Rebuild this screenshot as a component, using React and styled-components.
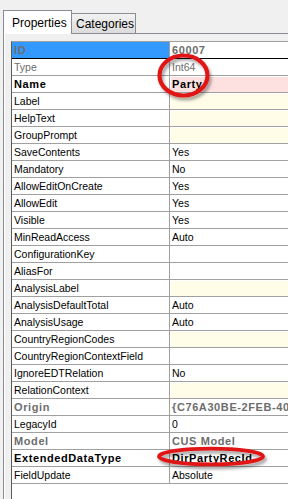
import React from 'react';
import styled, { createGlobalStyle } from 'styled-components';

const GlobalStyle = createGlobalStyle`
    html, body {
        margin: 0;
        padding: 0;
        background: #f0f0f0;
    }
    body {
        font-family: "Liberation Sans", Arial, sans-serif;
        font-size: 11px;
        color: #000;
    }
`

const Window = styled.div`
    position: relative;
    width: 288px;
    height: 499px;
    overflow: hidden;
    display: flex;
    flex-direction: column;
    background: #f0f0f0;
`

const TabStrip = styled.div`
    display: flex;
    align-items: flex-end;
    padding: 10px 0 0 3px;
    height: 23px;
    position: relative;
    z-index: 2;
`

const Tab = styled.div`
    box-sizing: border-box;
    display: flex;
    align-items: center;
    font-size: 12px;
    border: 1px solid #898c95;
    border-bottom: none;
    ${p => p.active ? `
        width: 69px;
        height: 24px;
        margin-bottom: -1px;
        padding-left: 8px;
        background: #fff;
    ` : `
        width: 65px;
        height: 20px;
        margin-left: -1px;
        padding-left: 4px;
        background: linear-gradient(#f3f3f3, #e6e6e6 50%, #dcdcdc);
    `}
`

const Panel = styled.div`
    flex: 1;
    display: flex;
    flex-direction: column;
    background: #f0f0f0;
    border-top: 1px solid #898c95;
    border-left: 1px solid #898c95;
    margin-left: 3px;
    padding: 7px 0 0 7px;
    box-shadow: inset 1px 0 0 #fff;
`

const Grid = styled.div`
    flex: 1;
    width: 300px;
    background: #fff;
    border-top: 1px solid #a0a0a0;
    border-left: 1px solid #5a5a5a;
`

const Row = styled.div`
    display: flex;
    height: 16px;
    border-bottom: 1px solid ${p => p.selected ? '#000' : '#a0a0a0'};
`

const cellText = p => `
    font-weight: ${p.bold ? 'bold' : 'normal'};
    font-size: ${p.bold ? '11px' : '10.5px'};
    letter-spacing: ${p.bold ? '0.6px' : '0'};
    color: ${p.muted ? '#6d6d6d' : '#000'};
`

const NameCell = styled.div`
    box-sizing: border-box;
    width: 158px;
    flex: none;
    padding-left: 2px;
    line-height: 16px;
    white-space: nowrap;
    overflow: hidden;
    border-right: 1px solid #a0a0a0;
    background: ${p => p.selected ? '#3399ff' : 'transparent'};
    ${cellText}
`

const ValueCell = styled.div`
    flex: 1;
    margin: 1px 0 0 1px;
    padding-left: 1px;
    line-height: 15px;
    white-space: nowrap;
    overflow: hidden;
    background: ${p => p.tint === 'pink' ? '#fde0e0' : p.tint === 'yellow' ? '#fffde8' : 'transparent'};
    ${cellText}
`

const Marks = styled.svg`
    position: absolute;
    top: 0;
    left: 0;
    pointer-events: none;
    z-index: 5;
`

const rows = [
    { name: 'ID', value: '60007', nameBold: true, nameMuted: true, bold: true, muted: true, selected: true },
    { name: 'Type', value: 'Int64', nameMuted: true, muted: true },
    { name: 'Name', value: 'Party', nameBold: true, bold: true, tint: 'pink' },
    { name: 'Label', tint: 'yellow' },
    { name: 'HelpText', tint: 'yellow' },
    { name: 'GroupPrompt', tint: 'yellow' },
    { name: 'SaveContents', value: 'Yes' },
    { name: 'Mandatory', value: 'No' },
    { name: 'AllowEditOnCreate', value: 'Yes' },
    { name: 'AllowEdit', value: 'Yes' },
    { name: 'Visible', value: 'Yes' },
    { name: 'MinReadAccess', value: 'Auto' },
    { name: 'ConfigurationKey' },
    { name: 'AliasFor' },
    { name: 'AnalysisLabel', tint: 'yellow' },
    { name: 'AnalysisDefaultTotal', value: 'Auto' },
    { name: 'AnalysisUsage', value: 'Auto' },
    { name: 'CountryRegionCodes', tint: 'yellow' },
    { name: 'CountryRegionContextField' },
    { name: 'IgnoreEDTRelation', value: 'No' },
    { name: 'RelationContext', tint: 'yellow' },
    { name: 'Origin', value: '{C76A30BE-2FEB-40', nameBold: true, nameMuted: true, bold: true, muted: true },
    { name: 'LegacyId', value: '0' },
    { name: 'Model', value: 'CUS Model', nameBold: true, nameMuted: true, bold: true, muted: true },
    { name: 'ExtendedDataType', value: 'DirPartyRecId', nameBold: true, bold: true },
    { name: 'FieldUpdate', value: 'Absolute' },
];

function App() {
    return (
        <Window>
            <GlobalStyle />
            <TabStrip>
                <Tab active>Properties</Tab>
                <Tab>Categories</Tab>
            </TabStrip>
            <Panel>
                <Grid>
                    {rows.map(row => (
                        <Row key={row.name} selected={row.selected}>
                            <NameCell selected={row.selected} bold={row.nameBold} muted={row.nameMuted}>
                                {row.name}
                            </NameCell>
                            <ValueCell tint={row.tint} bold={row.bold} muted={row.muted}>
                                {row.value}
                            </ValueCell>
                        </Row>
                    ))}
                </Grid>
            </Panel>
            <Marks width="288" height="499" viewBox="0 0 288 499">
                <defs>
                    <filter id="shade" x="-20%" y="-40%" width="150%" height="190%">
                        <feDropShadow dx="2" dy="3" stdDeviation="1.6" floodColor="#000" floodOpacity="0.35" />
                    </filter>
                </defs>
                <ellipse cx="183.5" cy="75.5" rx="24" ry="20" fill="none" stroke="#e01818" strokeWidth="4.2" filter="url(#shade)" />
                <ellipse cx="211" cy="456.5" rx="52" ry="7.8" fill="none" stroke="#e01818" strokeWidth="3.8" filter="url(#shade)" />
            </Marks>
        </Window>
    );
}

export default App;
